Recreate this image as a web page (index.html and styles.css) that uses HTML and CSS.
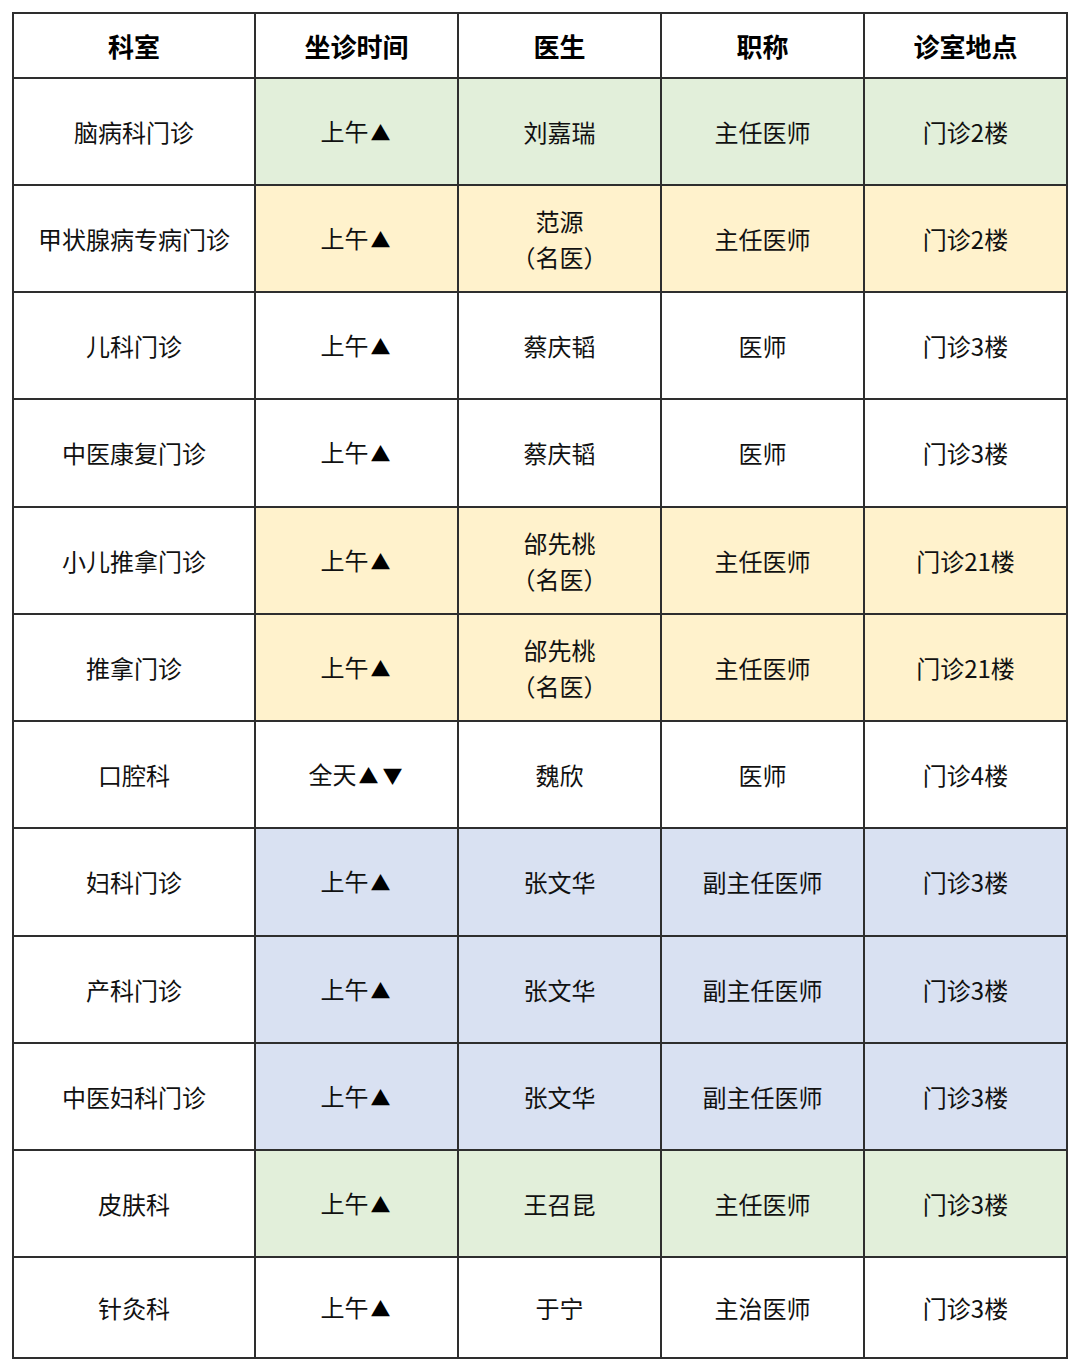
FILE: index.html
```html
<!DOCTYPE html>
<html lang="zh">
<head>
<meta charset="utf-8">
<link rel="stylesheet" href="styles.css">
</head>
<body>
<table class="schedule">
  <colgroup>
    <col class="c1"><col class="c2"><col class="c2"><col class="c2"><col class="c2">
  </colgroup>
  <thead>
    <tr><th>科室</th><th>坐诊时间</th><th>医生</th><th>职称</th><th>诊室地点</th></tr>
  </thead>
  <tbody>
    <tr class="green"><td>脑病科门诊</td><td>上午<span class="tri">▲</span></td><td>刘嘉瑞</td><td>主任医师</td><td>门诊2楼</td></tr>
    <tr class="yellow"><td>甲状腺病专病门诊</td><td>上午<span class="tri">▲</span></td><td>范源<br>（名医）</td><td>主任医师</td><td>门诊2楼</td></tr>
    <tr><td>儿科门诊</td><td>上午<span class="tri">▲</span></td><td>蔡庆韬</td><td>医师</td><td>门诊3楼</td></tr>
    <tr class="tall"><td>中医康复门诊</td><td>上午<span class="tri">▲</span></td><td>蔡庆韬</td><td>医师</td><td>门诊3楼</td></tr>
    <tr class="yellow"><td>小儿推拿门诊</td><td>上午<span class="tri">▲</span></td><td>邰先桃<br>（名医）</td><td>主任医师</td><td>门诊21楼</td></tr>
    <tr class="yellow"><td>推拿门诊</td><td>上午<span class="tri">▲</span></td><td>邰先桃<br>（名医）</td><td>主任医师</td><td>门诊21楼</td></tr>
    <tr><td>口腔科</td><td>全天<span class="tri">▲</span><span class="tri">▼</span></td><td>魏欣</td><td>医师</td><td>门诊4楼</td></tr>
    <tr class="blue tall"><td>妇科门诊</td><td>上午<span class="tri">▲</span></td><td>张文华</td><td>副主任医师</td><td>门诊3楼</td></tr>
    <tr class="blue"><td>产科门诊</td><td>上午<span class="tri">▲</span></td><td>张文华</td><td>副主任医师</td><td>门诊3楼</td></tr>
    <tr class="blue"><td>中医妇科门诊</td><td>上午<span class="tri">▲</span></td><td>张文华</td><td>副主任医师</td><td>门诊3楼</td></tr>
    <tr class="green"><td>皮肤科</td><td>上午<span class="tri">▲</span></td><td>王召昆</td><td>主任医师</td><td>门诊3楼</td></tr>
    <tr class="last"><td>针灸科</td><td>上午<span class="tri">▲</span></td><td>于宁</td><td>主治医师</td><td>门诊3楼</td></tr>
  </tbody>
</table>
</body>
</html>
```

FILE: styles.css
```css
html, body {
  margin: 0;
  padding: 0;
  background: #ffffff;
}
body {
  padding: 12px 0 0 12px;
  font-family: "Noto Sans CJK SC", "Noto Sans", sans-serif;
  color: #111111;
}
.schedule {
  border-collapse: collapse;
  table-layout: fixed;
  width: 1056px;
}
.c1 { width: 242px; }
.c2 { width: 203px; }
.schedule th,
.schedule td {
  border: 2px solid #2e2e2e;
  text-align: center;
  vertical-align: middle;
  padding: 0;
  font-size: 24px;
  line-height: 36px;
}
.schedule th {
  font-weight: 700;
  font-size: 26px;
  height: 63px;
  color: #000;
}
.schedule td {
  height: 105px;
}
.schedule tr.tall td {
  height: 106px;
}
.schedule tr.last td {
  height: 99px;
}
.schedule tr.green td:not(:first-child) { background: #e2efda; }
.schedule tr.yellow td:not(:first-child) { background: #fff2cc; }
.schedule tr.blue td:not(:first-child) { background: #d9e1f2; }
.tri {
  display: inline-block;
  width: 24px;
  font-size: 20px;
  text-align: center;
  vertical-align: baseline;
  color: #000;
}
```
